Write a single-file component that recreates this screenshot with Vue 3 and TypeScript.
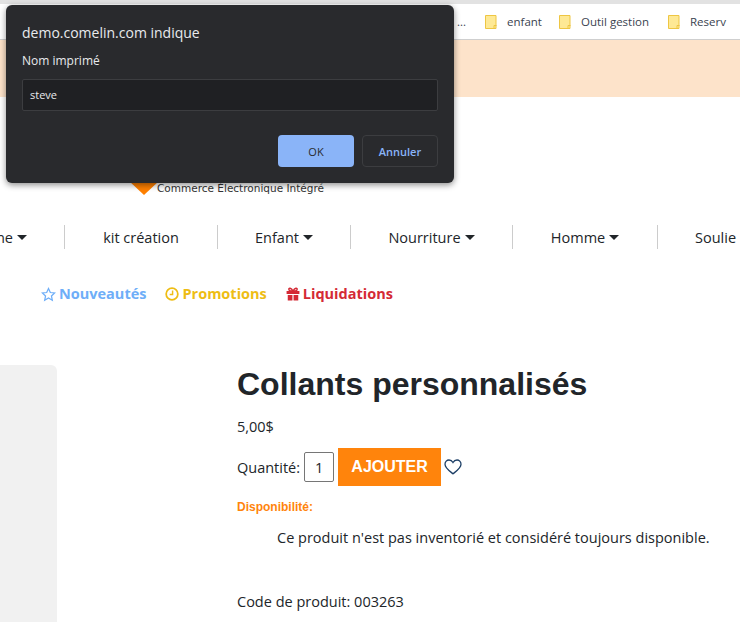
<template>
  <div class="page">
    <div class="top-strip"></div>
    <div class="bookmarks">
      <span class="cut">...</span>
      <span v-for="b in bookmarks" :key="b.label" class="bookmark" :style="{ width: b.width + 'px' }">
        <svg class="folder" width="12" height="14" viewBox="0 0 12 14">
          <path d="M.5.5h10.5v13H.5z" fill="#fee995" stroke="#eec643" />
          <path d="M9 13.5v-3h2.5" fill="none" stroke="#eec643" />
        </svg>
        {{ b.label }}
      </span>
    </div>
    <div class="notice"></div>

    <div class="logo">
      <svg class="logo-mark" width="30" height="14" viewBox="0 0 30 14">
        <path d="M0 0h30L15 14z" fill="#ff8000" />
      </svg>
      <span class="logo-text">Commerce Électronique Intégré</span>
    </div>

    <nav class="nav">
      <a v-for="item in navItems" :key="item.label" class="nav-item" :style="{ width: item.width + 'px' }">
        {{ item.label }}<i v-if="item.caret" class="caret"></i>
      </a>
    </nav>

    <div class="promos">
      <span class="promo blue">
        <svg width="15" height="15" viewBox="0 0 24 24" fill="none" stroke="currentColor" stroke-width="2">
          <path d="M12 2.5l2.9 6.3 6.9.8-5.1 4.7 1.4 6.8-6.1-3.4-6.100 3.400 1.400-6.800-5.100-4.700 6.900-.8z" />
        </svg>
        Nouveautés
      </span>
      <span class="promo yellow">
        <svg width="14" height="14" viewBox="0 0 24 24" fill="none" stroke="currentColor" stroke-width="3">
          <circle cx="12" cy="12" r="10" />
          <path d="M13 6v7H8" stroke-width="2.500" />
        </svg>
        Promotions
      </span>
      <span class="promo red">
        <svg width="14" height="14" viewBox="0 0 24 24" fill="currentColor">
          <path d="M1 7h22v5H1zM3 13.500h8V23H3zM13 13.500h8V23h-8z" />
          <path d="M12 7C9 1 4 1 5 4.500 5.500 6.500 9 7 12 7c3 0 6.500-.5 7-2.500C20 1 15 1 12 7z" fill="none" stroke="currentColor" stroke-width="2.500" />
        </svg>
        Liquidations
      </span>
    </div>

    <main class="product">
      <div class="gallery"></div>
      <section class="details">
        <h1>Collants personnalisés</h1>
        <p class="price">5,00$</p>
        <div class="buy-row">
          <label>Quantité:</label>
          <span class="qty">1</span>
          <button class="add">AJOUTER</button>
          <svg class="heart" width="18" height="16" viewBox="0 0 18 16" fill="none" stroke="#1d3f66" stroke-width="1.300">
            <path d="M9 14.800C6 12.300 1 9 1 5.200 1 2.700 2.900 1 5 1c1.700 0 3.100.9 4 2.500C9.900 1.900 11.300 1 13 1c2.100 0 4 1.700 4 4.200 0 3.800-5 7.100-8 9.600z" />
          </svg>
        </div>
        <p class="stock-title">Disponibilité:</p>
        <p class="stock-text">Ce produit n'est pas inventorié et considéré toujours disponible.</p>
        <p class="code">Code de produit: 003263</p>
      </section>
    </main>

    <div class="dialog">
      <div class="dialog-title">demo.comelin.com indique</div>
      <div class="dialog-label">Nom imprimé</div>
      <div class="dialog-input">steve</div>
      <div class="dialog-actions">
        <button class="btn-ok">OK</button>
        <button class="btn-cancel">Annuler</button>
      </div>
    </div>
  </div>
</template>

<script setup lang="ts">
const bookmarks = [
  { label: "enfant", width: 74 },
  { label: "Outil gestion", width: 109 },
  { label: "Reserv", width: 60 },
];

const navItems = [
  { label: "me", width: 65, caret: true },
  { label: "kit création", width: 153, caret: false },
  { label: "Enfant", width: 133, caret: true },
  { label: "Nourriture", width: 162, caret: true },
  { label: "Homme", width: 145, caret: true },
  { label: "Soulie", width: 82, caret: false },
];
</script>

<style>
html,
body {
  margin: 0;
  background: #fff;
}
</style>

<style scoped>
.page {
  position: relative;
  width: 740px;
  height: 622px;
  overflow: hidden;
  background: #fff;
  color: #212529;
  font-family: "Open Sans", "Noto Sans", sans-serif;
}
.top-strip {
  height: 4px;
  background: #e2e2e2;
}
.bookmarks {
  height: 36px;
  box-sizing: border-box;
  padding-left: 457px;
  display: flex;
  align-items: center;
  font-size: 11.500px;
  color: #3a4350;
  background: #fff;
  border-bottom: 1px solid #cfcfcf;
}
.cut {
  width: 28px;
  margin-bottom: 0;
}
.bookmark {
  display: flex;
  align-items: center;
  gap: 10px;
  white-space: nowrap;
}
.folder {
  flex: none;
}
.notice {
  height: 57px;
  background: #fde3ca;
}
.logo {
  height: 99px;
  padding-left: 129px;
  display: flex;
  align-items: flex-end;
  gap: 0;
  position: relative;
}
.logo-mark {
  margin-bottom: 1px;
}
.logo-text {
  margin-left: -2px;
  margin-bottom: 1px;
  font-size: 10.500px;
  font-family: "DejaVu Sans", sans-serif;
  color: #333;
  line-height: 14px;
}
.nav {
  display: flex;
  margin-top: 29px;
  height: 24px;
}
.nav-item {
  flex: none;
  display: flex;
  align-items: center;
  justify-content: center;
  box-sizing: border-box;
  border-right: 1px solid #ccc;
  font-size: 14.500px;
  color: #212529;
  white-space: nowrap;
}
.nav-item:first-child {
  justify-content: flex-end;
  padding-right: 37px;
}
.nav-item:last-child {
  border-right: 0;
  justify-content: flex-start;
  padding-left: 37px;
}
.caret {
  display: inline-block;
  margin-left: 4px;
  margin-top: 1px;
  border-left: 5px solid transparent;
  border-right: 5px solid transparent;
  border-top: 5px solid #212529;
}
.promos {
  display: flex;
  gap: 19px;
  margin-top: 34px;
  padding-left: 41px;
  font-size: 14.500px;
  font-weight: 700;
  line-height: 22px;
}
.promo {
  display: flex;
  align-items: center;
  gap: 3px;
}
.blue {
  color: #6eaef8;
}
.yellow {
  color: #eebd14;
}
.red {
  color: #d42a35;
}
.product {
  display: flex;
  margin-top: 60px;
}
.gallery {
  width: 57px;
  height: 400px;
  background: #f1f1f1;
  border-top-right-radius: 6px;
  flex: none;
}
.details {
  margin-left: 180px;
}
h1 {
  margin: 0;
  font-family: "Liberation Sans", sans-serif;
  font-size: 32px;
  font-weight: 700;
  line-height: 38px;
  white-space: nowrap;
}
.price {
  margin: 13px 0 0;
  font-size: 14.500px;
  line-height: 22px;
}
.buy-row {
  display: flex;
  align-items: center;
  margin-top: 10px;
  font-size: 14.500px;
}
.qty {
  margin-left: 4px;
  width: 30px;
  height: 30px;
  box-sizing: border-box;
  border: 1px solid #767676;
  border-radius: 2px;
  display: flex;
  align-items: center;
  justify-content: center;
}
.add {
  margin-left: 4px;
  width: 103px;
  height: 38px;
  padding: 0;
  border: 0;
  background: #ff840c;
  color: #fff;
  font-family: "Liberation Sans", sans-serif;
  font-size: 16px;
  font-weight: 700;
}
.heart {
  margin-left: 3px;
  margin-top: -1px;
}
.stock-title {
  margin: 12px 0 0;
  color: #ff840c;
  font-family: "Liberation Sans", sans-serif;
  font-size: 12px;
  font-weight: 700;
  line-height: 18px;
}
.stock-text {
  margin: 11px 0 0;
  padding-left: 40px;
  font-size: 14.500px;
  line-height: 22px;
  white-space: nowrap;
}
.code {
  margin: 42px 0 0;
  font-size: 14.500px;
  line-height: 22px;
}
.dialog {
  position: absolute;
  left: 6px;
  top: 5px;
  width: 448px;
  height: 178px;
  box-sizing: border-box;
  padding: 16px;
  background: #292a2d;
  border-radius: 6px;
  box-shadow: 0 2px 6px rgba(0, 0, 0, 0.45);
  color: #e8eaed;
}
.dialog-title {
  font-size: 14px;
  line-height: 24px;
}
.dialog-label {
  margin-top: 6px;
  font-size: 12px;
  line-height: 20px;
}
.dialog-input {
  margin-top: 8px;
  height: 32px;
  box-sizing: border-box;
  padding-left: 7px;
  border: 1px solid #3c3d40;
  border-radius: 2px;
  background: #1f2023;
  font-size: 11px;
  line-height: 30px;
}
.dialog-actions {
  display: flex;
  justify-content: flex-end;
  gap: 8px;
  margin-top: 24px;
}
.dialog-actions button {
  width: 76px;
  height: 32px;
  padding: 0;
  border-radius: 4px;
  font-family: inherit;
  font-size: 11px;
}
.btn-ok {
  border: 0;
  background: #8ab4f8;
  color: #292a2d;
}
.btn-cancel {
  border: 1px solid #3c3d40;
  background: #292a2d;
  color: #8ab4f8;
  font-weight: 600;
}
</style>
